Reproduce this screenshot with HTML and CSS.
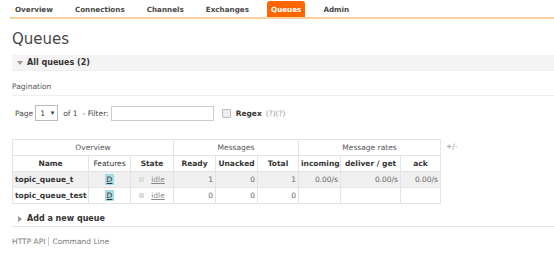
FILE: index.html
```html
<!DOCTYPE html>
<html lang="en">
<head>
    <meta charset="UTF-8">
    <title>RabbitMQ Management - Queues</title>
    <link rel="stylesheet" href="styles.css">
</head>
<body>

    <div class="menu">
        <a href="#">Overview</a>
        <a href="#">Connections</a>
        <a href="#">Channels</a>
        <a href="#">Exchanges</a>
        <a href="#" class="selected">Queues</a>
        <a href="#">Admin</a>
    </div>

    <div class="main">
        <h1>Queues</h1>

        <div class="section">
            <h2 class="open">All queues (2)</h2>
        </div>

        <h3>Pagination</h3>

        <div class="filter">
            <span>Page</span>
            <span class="page-select">1 <i>&#9662;</i></span>
            <span class="of">of 1</span>
            <span class="dash">- Filter:</span>
            <input type="text" class="filter-input">
            <span class="box"></span>
            <b>Regex</b>
            <span class="help">(?)(?)</span>
        </div>

        <div class="table-wrap">
            <table class="list">
                <colgroup>
                    <col style="width:76px">
                    <col style="width:42px">
                    <col style="width:43px">
                    <col style="width:42px">
                    <col style="width:42px">
                    <col style="width:41px">
                    <col style="width:42px">
                    <col style="width:60px">
                    <col style="width:40px">
                </colgroup>
                <thead>
                    <tr class="group">
                        <th colspan="3">Overview</th>
                        <th colspan="3">Messages</th>
                        <th colspan="3">Message rates</th>
                    </tr>
                    <tr>
                        <th>Name</th>
                        <th class="plain">Features</th>
                        <th>State</th>
                        <th>Ready</th>
                        <th>Unacked</th>
                        <th>Total</th>
                        <th>incoming</th>
                        <th>deliver / get</th>
                        <th>ack</th>
                    </tr>
                </thead>
                <tbody>
                    <tr class="alt1">
                        <td class="name">topic_queue_t</td>
                        <td class="c"><span class="tag">D</span></td>
                        <td class="c"><span class="state-box"></span><span class="idle">idle</span></td>
                        <td class="r">1</td>
                        <td class="r">0</td>
                        <td class="r">1</td>
                        <td class="r">0.00/s</td>
                        <td class="r">0.00/s</td>
                        <td class="r">0.00/s</td>
                    </tr>
                    <tr class="alt2">
                        <td class="name">topic_queue_test</td>
                        <td class="c"><span class="tag">D</span></td>
                        <td class="c"><span class="state-box"></span><span class="idle">idle</span></td>
                        <td class="r">0</td>
                        <td class="r">0</td>
                        <td class="r">0</td>
                        <td></td>
                        <td></td>
                        <td></td>
                    </tr>
                </tbody>
            </table>
            <span class="toggle">+/-</span>
        </div>

        <div class="section closed-section">
            <h2 class="closed">Add a new queue</h2>
        </div>

        <div class="footer">
            <a href="#">HTTP API</a><a href="#">Command Line</a>
        </div>
    </div>

</body>
</html>
```

FILE: styles.css
```css
body {
    margin: 0;
    font-family: "DejaVu Sans", Verdana, sans-serif;
    font-size: 7.5px;
    color: #484848;
    background: #fff;
}
a {
    color: #484848;
    text-decoration: none;
}
.menu {
    display: flex;
    align-items: flex-end;
    height: 17px;
    margin-left: 10px;
    padding-left: 1px;
    border-bottom: 2px solid #fbd09c;
}
.menu a {
    font-weight: bold;
    font-size: 7.2px;
    padding: 0 4px 1px;
    margin-right: 14px;
    line-height: 12px;
    color: #484848;
}
.menu a.selected {
    background: #f60;
    color: #fff;
    border-radius: 3px 3px 0 0;
    padding: 3px 4px 1px;
}
.main {
    padding-left: 12px;
}
h1 {
    font-weight: normal;
    font-size: 15px;
    margin: 9px 0 0;
    height: 27px;
    line-height: 22px;
    color: #484848;
}
.section h2 {
    margin: 0;
    font-size: 8px;
    font-weight: bold;
    background: #f4f4f4;
    height: 15px;
    line-height: 15px;
    padding-left: 15px;
    position: relative;
    border-bottom: 1px solid #eee;
    color: #333;
}
.section h2.open::before {
    content: "";
    position: absolute;
    left: 5px;
    top: 6px;
    border-left: 3px solid transparent;
    border-right: 3px solid transparent;
    border-top: 4px solid #999;
}
.section h2.closed::before {
    content: "";
    position: absolute;
    left: 6px;
    top: 5px;
    border-top: 3px solid transparent;
    border-bottom: 3px solid transparent;
    border-left: 4px solid #999;
}
h3 {
    margin: 11px 0 0;
    font-size: 7.5px;
    font-weight: normal;
    color: #555;
    padding-bottom: 4px;
    border-bottom: 1px solid #eee;
}
.filter {
    display: flex;
    align-items: center;
    margin-top: 9px;
    padding-left: 3px;
    height: 16px;
    color: #484848;
}
.page-select {
    display: flex;
    align-items: center;
    justify-content: space-between;
    box-sizing: border-box;
    width: 23px;
    height: 16px;
    margin-left: 2px;
    padding: 0 3px 0 4px;
    border: 1px solid #bbb;
    background: #fff;
    color: #333;
}
.page-select i {
    font-style: normal;
    font-size: 7px;
}
.of {
    margin-left: 5px;
}
.dash {
    margin-left: 5px;
}
.filter-input {
    box-sizing: border-box;
    width: 103px;
    height: 15px;
    margin-left: 2px;
    border: 1px solid #ccc;
    padding: 0 1px;
}
.box {
    display: inline-block;
    width: 7px;
    height: 7px;
    border: 1px solid #bbb;
    border-radius: 1px;
    background: #eee;
    margin-left: 8px;
}
.filter b {
    margin-left: 5px;
    color: #333;
}
.help {
    margin-left: 4px;
    color: #999;
}
.table-wrap {
    display: flex;
    align-items: flex-start;
    margin-top: 18px;
}
.list {
    border-collapse: collapse;
    table-layout: fixed;
    width: 428px;
    border: 1px solid #e2e2e2;
}
.list th, .list td {
    border: 1px solid #e4e4e4;
    height: 15px;
    padding: 0 2px;
    white-space: nowrap;
}
.list th {
    font-weight: bold;
    text-align: center;
    color: #333;
}
.list tr.group th {
    font-weight: normal;
    color: #555;
}
.list th.plain {
    font-weight: normal;
}
.list tr.alt1 td {
    background: #f0f0f0;
}
.list td.name {
    font-weight: bold;
    color: #333;
}
.list td.c {
    text-align: center;
}
.list td.r {
    text-align: right;
    color: #666;
}
.tag {
    display: inline-block;
    background: #a6dde0;
    color: #333;
    text-decoration: underline;
    padding: 0 2px;
    line-height: 11px;
}
.state-box {
    display: inline-block;
    width: 5px;
    height: 5px;
    background: #ddd;
    margin-right: 7px;
}
.idle {
    color: #888;
    text-decoration: underline;
}
.toggle {
    margin-left: 5px;
    margin-top: 3px;
    color: #999;
}
.closed-section {
    margin-top: 7px;
}
.closed-section h2 {
    background: #fff;
    border-bottom: 1px solid #e4e4e4;
}
.footer {
    margin-top: 10px;
}
.footer a {
    color: #777;
}
.footer a + a {
    border-left: 1px solid #ccc;
    margin-left: 3px;
    padding-left: 3px;
}
```
